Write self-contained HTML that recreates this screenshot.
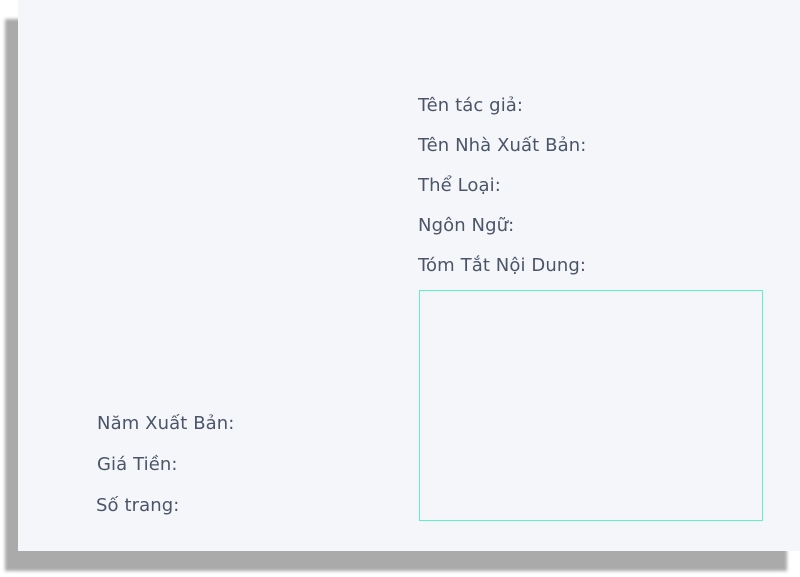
<!DOCTYPE html>
<html><head><meta charset="utf-8"><style>
html,body{margin:0;padding:0;width:800px;height:577px;background:#fff;overflow:hidden}
.sh{position:absolute;left:5px;top:19px;width:782px;height:552px;background:#aaa;filter:blur(1.5px)}
.p{position:absolute;left:18px;top:-2px;width:790px;height:553px;background:#f5f6fa}
.t{position:absolute;font-family:"DejaVu Sans","Liberation Sans",sans-serif;font-size:18px;line-height:21px;color:#4a5568;white-space:nowrap;letter-spacing:0.1px}
.box{position:absolute;left:419px;top:290px;width:342px;height:229px;border:1px solid #5ef0c8}
</style></head><body>
<div class="sh"></div><div class="p"></div>
<div class="t" style="left:418px;top:95px">Tên tác giả:</div>
<div class="t" style="left:418px;top:135px">Tên Nhà Xuất Bản:</div>
<div class="t" style="left:418px;top:175px">Thể Loại:</div>
<div class="t" style="left:418px;top:215px">Ngôn Ngữ:</div>
<div class="t" style="left:418px;top:255px">Tóm Tắt Nội Dung:</div>
<div class="box"></div>
<div class="t" style="left:97px;top:413px">Năm Xuất Bản:</div>
<div class="t" style="left:97px;top:454px">Giá Tiền:</div>
<div class="t" style="left:96px;top:495px">Số trang:</div>
</body></html>
